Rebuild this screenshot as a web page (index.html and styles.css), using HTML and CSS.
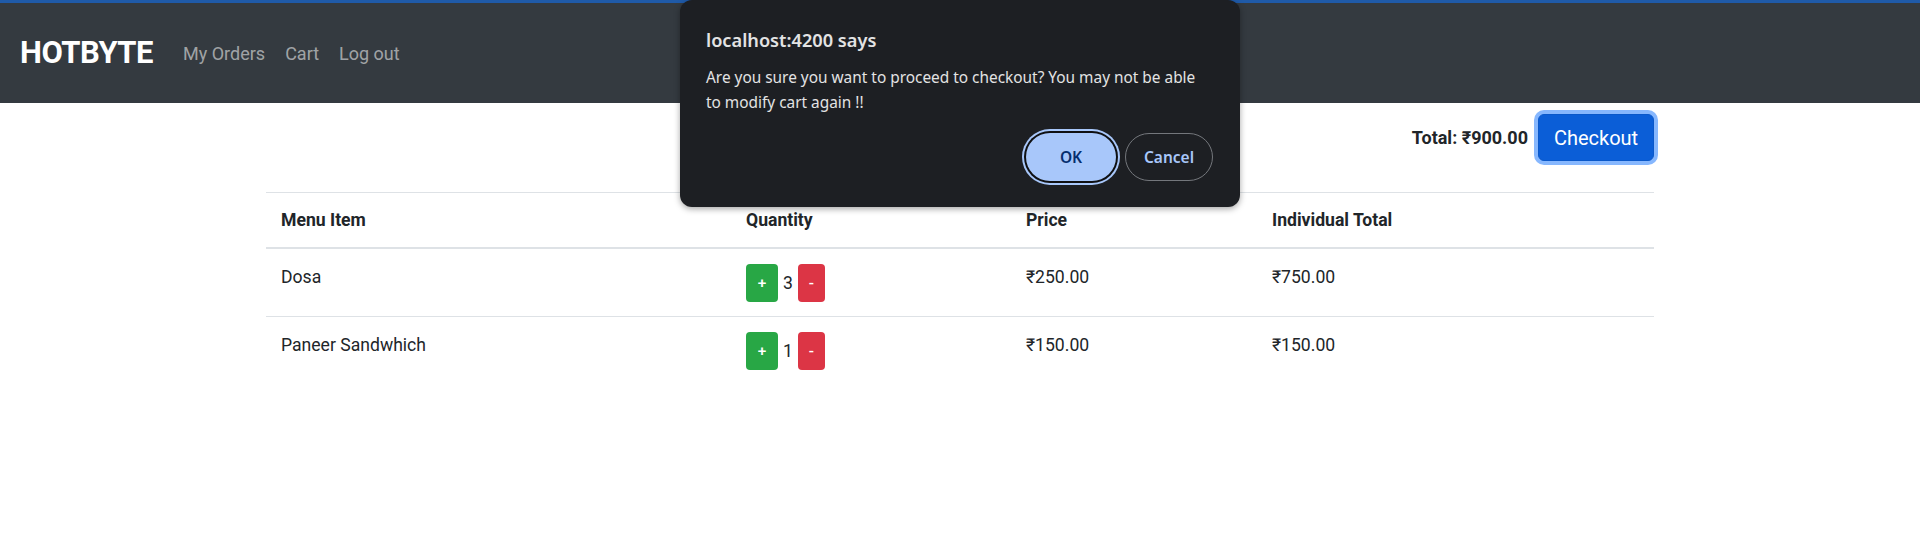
FILE: index.html
```html
<!DOCTYPE html>
<html lang="en">
<head>
<meta charset="utf-8">
<title>HOTBYTE - Cart</title>
<link rel="stylesheet" href="styles.css">
</head>
<body>
<div class="topline"></div>
<nav class="navbar">
  <span class="brand">HOTBYTE</span>
  <a class="nav-link" href="#">My Orders</a>
  <a class="nav-link" href="#">Cart</a>
  <a class="nav-link" href="#">Log out</a>
</nav>
<main class="container">
  <div class="total-row">
    <span class="total">Total: ₹900.00</span>
    <button class="btn-checkout">Checkout</button>
  </div>
  <table class="cart-table">
    <colgroup>
      <col class="c1"><col class="c2"><col class="c3"><col class="c4">
    </colgroup>
    <thead>
      <tr><th>Menu Item</th><th>Quantity</th><th>Price</th><th>Individual Total</th></tr>
    </thead>
    <tbody>
      <tr>
        <td>Dosa</td>
        <td><div class="qty"><button class="btn-plus">+</button><span class="num">3</span><button class="btn-minus">-</button></div></td>
        <td>₹250.00</td>
        <td>₹750.00</td>
      </tr>
      <tr>
        <td>Paneer Sandwhich</td>
        <td><div class="qty"><button class="btn-plus">+</button><span class="num">1</span><button class="btn-minus">-</button></div></td>
        <td>₹150.00</td>
        <td>₹150.00</td>
      </tr>
    </tbody>
  </table>
</main>
<div class="dialog">
  <div class="dlg-title">localhost:4200 says</div>
  <div class="dlg-msg">Are you sure you want to proceed to checkout? You may not be able<br>to modify cart again !!</div>
  <div class="dlg-actions">
    <button class="dlg-ok">OK</button>
    <button class="dlg-cancel">Cancel</button>
  </div>
</div>
</body>
</html>
```
FILE: styles.css
```css
* { box-sizing: border-box; }
html, body { margin: 0; padding: 0; }
body {
  font-family: Roboto, "Liberation Sans", sans-serif;
  font-size: 17.6px;
  line-height: 1.5;
  color: #212529;
  background: #fff;
  height: 547px;
  overflow: hidden;
  position: relative;
}
.topline { height: 3px; background: #1f5aa8; }
.navbar {
  height: 100px;
  background: #343a40;
  display: flex;
  align-items: center;
  padding-left: 20px;
}
.brand {
  font-size: 31px;
  font-weight: 700;
  color: #fff;
  margin-right: 20px;
  letter-spacing: -0.5px;
}
.nav-link {
  color: rgba(255,255,255,0.55);
  text-decoration: none;
  font-size: 18px;
  padding: 0 10px;
}
.container { width: 1388px; margin: 0 auto; }
.total-row {
  display: flex;
  justify-content: flex-end;
  align-items: center;
  gap: 10px;
  margin-top: 11px;
  height: 47px;
  padding-right: 0;
}
.total { font-weight: 700; font-size: 18px; }
.btn-checkout {
  height: 47px;
  width: 116px;
  font-family: Roboto, "Liberation Sans", sans-serif;
  font-size: 20px;
  color: #fff;
  background: #0b5ed7;
  border: 1px solid #0a58ca;
  border-radius: 6px;
  box-shadow: 0 0 0 4px #86b7fe;
  padding: 0;
}
.cart-table {
  width: 1388px;
  margin-top: 31px;
  border-collapse: collapse;
  table-layout: fixed;
}
.c1 { width: 465px; } .c2 { width: 280px; } .c3 { width: 246px; } .c4 { width: 397px; }
.cart-table th {
  text-align: left;
  font-weight: 700;
  padding: 14px 15px;
  border-top: 1px solid #dee2e6;
  border-bottom: 2px solid #dee2e6;
  vertical-align: bottom;
}
.cart-table td {
  padding: 14.5px 15px;
  border-top: 1px solid #dee2e6;
  vertical-align: top;
}
.qty { display: flex; align-items: center; gap: 5px; height: 38px; }
.qty button {
  height: 38px;
  border: none;
  border-radius: 4px;
  color: #fff;
  font-family: Roboto, "Liberation Sans", sans-serif;
  font-weight: 500;
  font-size: 15.4px;
  padding: 0;
}
.btn-plus { width: 32px; background: #28a745; }
.btn-minus { width: 27px; background: #dc3545; }
.num { font-size: 17.6px; }
.dialog {
  position: absolute;
  left: 680px;
  top: 0;
  width: 560px;
  height: 207px;
  background: #1d1f23;
  border-radius: 12px;
  box-shadow: 0 2px 6px rgba(0,0,0,0.35);
  padding: 28px 27px 0 26px;
  font-family: "Noto Sans", "Open Sans", sans-serif;
  color: #e3e3e3;
}
.dlg-title { font-size: 18.2px; font-weight: 600; line-height: 24px; }
.dlg-msg { font-size: 15.4px; line-height: 25px; margin-top: 12.5px; }
.dlg-actions {
  display: flex;
  justify-content: flex-end;
  gap: 9px;
  margin-top: 18.5px;
}
.dlg-actions button {
  height: 48px;
  border-radius: 24px;
  font-family: "Noto Sans", "Open Sans", sans-serif;
  font-size: 15.5px;
  font-weight: 600;
  padding: 0;
}
.dlg-ok {
  width: 90px;
  background: #a8c7fa;
  color: #062e6f;
  border: none;
  box-shadow: 0 0 0 2px #0f1012, 0 0 0 4px #a8c7fa;
}
.dlg-cancel {
  width: 88px;
  background: transparent;
  color: #a8c7fa;
  border: 1px solid #74777c;
}
```
